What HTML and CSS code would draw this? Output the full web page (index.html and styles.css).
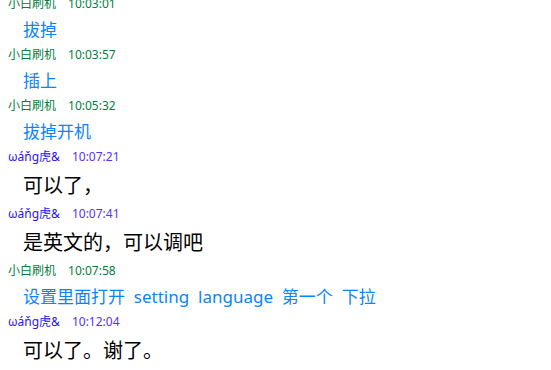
FILE: index.html
```html
<!DOCTYPE html>
<html lang="zh-CN">
<head>
  <meta charset="UTF-8" />
  <title>消息记录</title>
  <link rel="stylesheet" href="styles.css">
</head>
<body>

  <!-- Chat log -->
  <div class="log">
    <div class="entry">
      <div class="head other"><span class="name">小白刷机</span><span class="time">10:03:01</span></div>
      <div class="msg other">拔掉</div>
    </div>
    <div class="entry">
      <div class="head other"><span class="name">小白刷机</span><span class="time">10:03:57</span></div>
      <div class="msg other">插上</div>
    </div>
    <div class="entry">
      <div class="head other"><span class="name">小白刷机</span><span class="time">10:05:32</span></div>
      <div class="msg other">拔掉开机</div>
    </div>
    <div class="entry">
      <div class="head me"><span class="name">ωáňg虎&amp;</span><span class="time">10:07:21</span></div>
      <div class="msg me">可以了，</div>
    </div>
    <div class="entry">
      <div class="head me"><span class="name">ωáňg虎&amp;</span><span class="time">10:07:41</span></div>
      <div class="msg me">是英文的，可以调吧</div>
    </div>
    <div class="entry">
      <div class="head other"><span class="name">小白刷机</span><span class="time">10:07:58</span></div>
      <div class="msg other">设置里面打开&nbsp; setting&nbsp; language&nbsp; 第一个&nbsp; 下拉</div>
    </div>
    <div class="entry">
      <div class="head me"><span class="name">ωáňg虎&amp;</span><span class="time">10:12:04</span></div>
      <div class="msg me">可以了。谢了。</div>
    </div>
  </div>

</body>
</html>
```

FILE: styles.css
```css
html, body {
  margin: 0;
  padding: 0;
  background: #ffffff;
  overflow: hidden;
  font-family: "Noto Sans", "Noto Sans CJK SC", sans-serif;
}

.log {
  margin-top: -6px;
  padding: 0 8px;
}

.head {
  display: flex;
  gap: 12px;
  font-size: 12px;
  line-height: 20px;
  white-space: nowrap;
}

.head.other {
  color: #008040;
}

.head.me {
  color: #2a10ff;
}

.head.me .time {
  color: #5a30ff;
}

.msg {
  padding-left: 15px;
  white-space: nowrap;
}

.msg.other {
  font-size: 17px;
  line-height: 31px;
  color: #0a84ff;
}

.msg.me {
  font-size: 20px;
  line-height: 37px;
  color: #000000;
}
```
